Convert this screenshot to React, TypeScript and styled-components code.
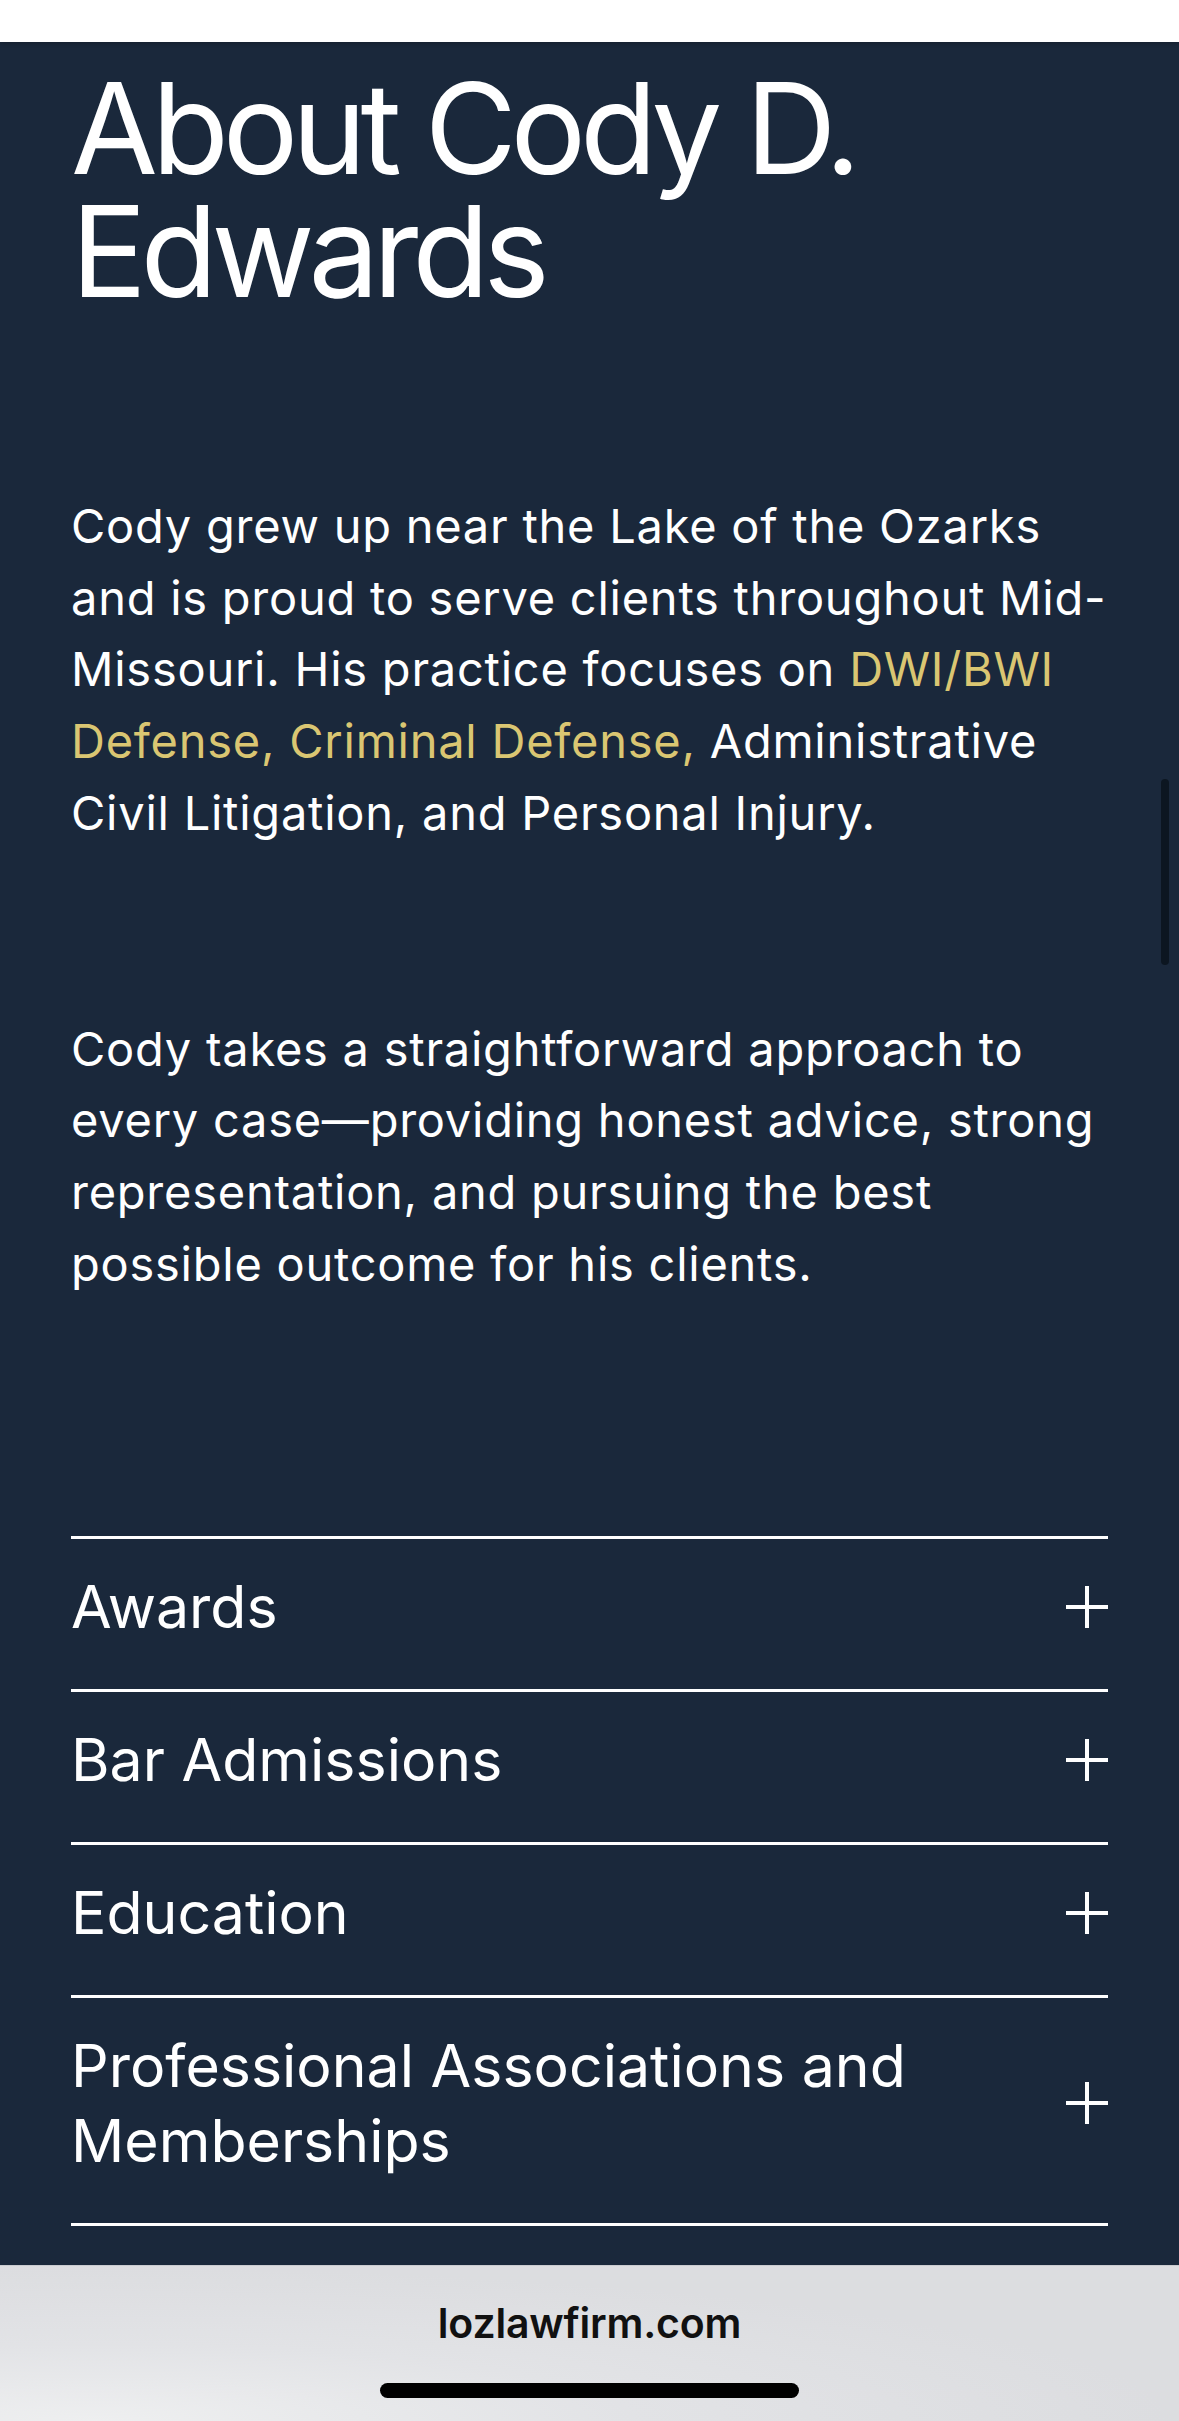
import { useState } from "react";
import styled, { createGlobalStyle } from "styled-components";

const GlobalStyle = createGlobalStyle`
  * { box-sizing: border-box; }
  html, body {
    margin: 0;
    padding: 0;
    background: #1a283b;
  }
  body {
    font-family: Inter, "Noto Sans", "Liberation Sans", sans-serif;
    -webkit-font-smoothing: antialiased;
  }
`;

const Page = styled.div`
  width: 1179px;
  height: 2421px;
  display: flex;
  flex-direction: column;
  overflow: hidden;
  position: relative;
`;

const TopStrip = styled.div`
  height: 42px;
  flex-shrink: 0;
  background: #ffffff;
  box-shadow: 0 2px 4px rgba(0, 0, 0, 0.18);
  position: relative;
  z-index: 1;
`;

const Main = styled.main`
  flex: 1;
  background: #1a283b;
  padding: 25px 71px 0;
  overflow: hidden;
  position: relative;
  color: #ffffff;
`;

const Title = styled.h1`
  margin: 0;
  font-size: 126px;
  line-height: 123px;
  font-weight: 400;
  letter-spacing: -0.049em;
  color: #ffffff;
`;

const Paragraph = styled.p<{ $gap: number }>`
  margin: ${(p) => p.$gap}px -12px 0 0;
  font-size: 47px;
  line-height: 71.7px;
  font-weight: 400;
  letter-spacing: 0.016em;
  color: #ffffff;
`;

const Highlight = styled.span`
  color: #dac672;
`;

const Accordion = styled.div`
  margin-top: 237px;
  border-bottom: 3px solid #ffffff;
`;

const Row = styled.button`
  width: 100%;
  display: flex;
  align-items: center;
  justify-content: space-between;
  gap: 40px;
  padding: 30px 0 45px;
  background: none;
  border: none;
  border-top: 3px solid #ffffff;
  color: #ffffff;
  text-align: left;
  cursor: pointer;
  font-family: inherit;
`;

const RowLabel = styled.span`
  font-size: 59px;
  line-height: 75px;
  font-weight: 400;
  letter-spacing: 0;
  max-width: 900px;
`;

const PlusIcon = styled.svg`
  width: 42px;
  height: 42px;
  flex-shrink: 0;
`;

const Scrollbar = styled.div`
  position: absolute;
  right: 10px;
  top: 737px;
  width: 8px;
  height: 186px;
  border-radius: 4px;
  background: rgba(8, 16, 26, 0.75);
`;

const BrowserBar = styled.footer`
  height: 156px;
  flex-shrink: 0;
  background: radial-gradient(
    ellipse at 8% 100%,
    #eeeff0 0%,
    #e2e3e6 35%,
    #dcdde0 70%
  );
  display: flex;
  flex-direction: column;
  align-items: center;
  border-top: 1px solid #c9cbcf;
`;

const Address = styled.div`
  margin-top: 34px;
  font-size: 41px;
  line-height: 46px;
  font-weight: 600;
  color: #111111;
  letter-spacing: -0.005em;
`;

const HomeIndicator = styled.div`
  margin-top: 37px;
  width: 419px;
  height: 15px;
  border-radius: 8px;
  background: #000000;
`;

const Plus = () => (
  <PlusIcon viewBox="0 0 42 42">
    <line x1="21" y1="0" x2="21" y2="42" stroke="#ffffff" strokeWidth="4" />
    <line x1="0" y1="21" x2="42" y2="21" stroke="#ffffff" strokeWidth="4" />
  </PlusIcon>
);

const sections = [
  "Awards",
  "Bar Admissions",
  "Education",
  "Professional Associations and Memberships",
];

export default function App() {
  const [open, setOpen] = useState<string | null>(null);

  return (
    <>
      <GlobalStyle />
      <Page>
        <TopStrip />
        <Main>
          <Title>
            About Cody D.
            <br />
            Edwards
          </Title>
          <Paragraph $gap={177}>
            Cody grew up near the Lake of the Ozarks and is proud to serve
            clients throughout Mid-Missouri. His practice focuses on{" "}
            <Highlight>DWI/BWI Defense, Criminal Defense,</Highlight>{" "}
            Administrative Civil Litigation, and Personal Injury.
          </Paragraph>
          <Paragraph $gap={164}>
            Cody takes a straightforward approach to every case—providing
            honest advice, strong representation, and pursuing the best possible
            outcome for his clients.
          </Paragraph>
          <Accordion>
            {sections.map((s) => (
              <Row key={s} onClick={() => setOpen(open === s ? null : s)}>
                <RowLabel>{s}</RowLabel>
                <Plus />
              </Row>
            ))}
          </Accordion>
          <Scrollbar />
        </Main>
        <BrowserBar>
          <Address>lozlawfirm.com</Address>
          <HomeIndicator />
        </BrowserBar>
      </Page>
    </>
  );
}
